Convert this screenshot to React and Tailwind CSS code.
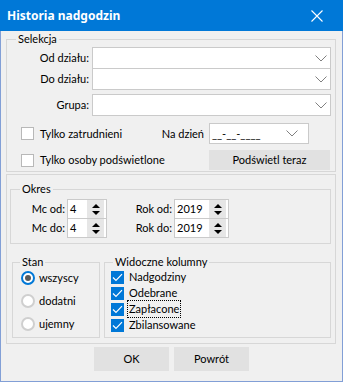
function Chevron() {
  return (
    <svg width="12" height="7" viewBox="0 0 12 7">
      <polyline points="0.5,0.5 6,6 11.5,0.5" fill="none" stroke="#808080" strokeWidth="1" />
    </svg>
  );
}

function Combo() {
  return (
    <div className="ml-[3px] w-[239px] h-[22px] flex items-center justify-end bg-white border border-[#cacaca] pr-[3px]">
      <Chevron />
    </div>
  );
}

function Spin({ value, width }) {
  return (
    <div className={`ml-[2px] h-[20px] flex items-stretch bg-white border border-[#cacaca] ${width}`}>
      <span className="flex-1 pl-[2px] leading-[18px]">{value}</span>
      <div className="w-[17px] mr-[2px] bg-[#e6e6e6] flex flex-col items-center justify-center gap-[3px]">
        <svg width="8" height="4" viewBox="0 0 8 4">
          <polygon points="4,0 8,4 0,4" fill="#000" />
        </svg>
        <svg width="8" height="4" viewBox="0 0 8 4">
          <polygon points="0,0 8,0 4,4" fill="#000" />
        </svg>
      </div>
    </div>
  );
}

function Box() {
  return <span className="block w-[13px] h-[13px] shrink-0 bg-white border border-[#b8b8b8]" />;
}

function Checked() {
  return (
    <span className="w-[13px] h-[13px] shrink-0 bg-[#0078d7] flex items-center justify-center">
      <svg width="11" height="9" viewBox="0 0 11 9">
        <polyline points="1,4.5 4,7.5 10,1.2" fill="none" stroke="#fff" strokeWidth="1.2" />
      </svg>
    </span>
  );
}

function Radio({ checked }) {
  if (checked) {
    return (
      <span className="w-[14px] h-[14px] shrink-0 rounded-full border-2 border-[#0078d7] bg-white flex items-center justify-center">
        <span className="w-[6px] h-[6px] rounded-full bg-[#5a5a5a]" />
      </span>
    );
  }
  return <span className="block w-[14px] h-[14px] shrink-0 rounded-full border-2 border-[#cfcfcf] bg-white" />;
}

export default function App() {
  const stan = [
    { label: "wszyscy", checked: true },
    { label: "dodatni", checked: false },
    { label: "ujemny", checked: false },
  ];

  return (
    <div className="w-[343px] h-[382px] flex flex-col bg-[#829fd6] font-['Lato',sans-serif] text-[11px] leading-[16px] text-black">
      <div className="h-[31px] shrink-0 flex items-center justify-between pl-[7px] pr-[20px] bg-[#0078d7] text-white text-[12px] font-bold font-['Noto_Sans',sans-serif]">
        <span>Historia nadgodzin</span>
        <svg width="12" height="12" viewBox="0 0 12 12">
          <path d="M0.5 0.5 L11.5 11.5 M11.5 0.5 L0.5 11.5" stroke="#fff" strokeWidth="1.1" />
        </svg>
      </div>

      <div className="flex-1 mx-[1px] mb-[1px] bg-[#f0f0f0] flex flex-col pt-[1px]">
        {/* Selekcja */}
        <fieldset className="ml-[5px] w-[330px] h-[140px] border border-[#d7d7d7] min-w-0">
          <legend className="ml-[9px] px-[2px] leading-[14px]">Selekcja</legend>
          <div className="flex flex-col mt-[1px]">
            <div className="flex items-center h-[22px]">
              <span className="w-[82px] text-right">Od działu:</span>
              <Combo />
            </div>
            <div className="flex items-center h-[22px] -mt-px">
              <span className="w-[82px] text-right">Do działu:</span>
              <Combo />
            </div>
            <div className="flex items-center h-[22px] mt-[4px]">
              <span className="w-[82px] text-right">Grupa:</span>
              <Combo />
            </div>

            <div className="flex items-center h-[21px] mt-[7px]">
              <span className="ml-[14px]"><Box /></span>
              <span className="ml-[6px] flex-1">Tylko zatrudnieni</span>
              <span>Na dzień</span>
              <div className="ml-[5px] mr-[26px] w-[100px] h-[21px] flex items-center bg-white border border-[#cacaca]">
                <span className="pl-[2px]">__-__-____</span>
                <span className="ml-auto mr-[10px] flex"><Chevron /></span>
              </div>
            </div>
            <div className="flex items-center h-[20px] mt-[6px]">
              <span className="ml-[14px]"><Box /></span>
              <span className="ml-[6px] flex-1">Tylko osoby podświetlone</span>
              <button className="mr-[5px] w-[121px] h-[20px] bg-[#e1e1e1]">Podświetl teraz</button>
            </div>
          </div>
        </fieldset>

        {/* Okres / Stan / Widoczne */}
        <div className="ml-[5px] mt-[2px] w-[330px] h-[170px] border border-[#d7d7d7] flex flex-col">
          <fieldset className="ml-[3px] mt-[7px] w-[321px] h-[62px] border border-[#d7d7d7] min-w-0">
            <legend className="ml-[9px] px-[2px] leading-[14px]">Okres</legend>
            <div className="flex flex-col mt-[3px]">
              <div className="flex items-center h-[20px]">
                <span className="w-[54px] text-right">Mc od:</span>
                <Spin value="4" width="w-[40px]" />
                <span className="w-[65px] text-right">Rok od:</span>
                <Spin value="2019" width="w-[55px]" />
              </div>
              <div className="flex items-center h-[20px] -mt-px">
                <span className="w-[54px] text-right">Mc do:</span>
                <Spin value="4" width="w-[40px]" />
                <span className="w-[65px] text-right">Rok do:</span>
                <Spin value="2019" width="w-[55px]" />
              </div>
            </div>
          </fieldset>

          <div className="flex ml-[5px] mt-[11px] gap-[4px]">
            <fieldset className="w-[88px] h-[83px] border border-[#d7d7d7] min-w-0">
              <legend className="ml-[7px] px-[2px] leading-[14px]">Stan</legend>
              <div className="flex flex-col gap-[7px] mt-[1px]">
                {stan.map((s) => (
                  <div key={s.label} className="flex items-center h-[16px]">
                    <span className="ml-[8px] flex"><Radio checked={s.checked} /></span>
                    <span className="ml-[4px]">{s.label}</span>
                  </div>
                ))}
              </div>
            </fieldset>

            <fieldset className="w-[227px] h-[83px] border border-[#d7d7d7] min-w-0">
              <legend className="ml-[8px] px-[2px] leading-[14px]">Widoczne kolumny</legend>
              <div className="flex flex-col">
                <div className="flex items-center h-[16px]">
                  <span className="ml-[6px] flex"><Checked /></span>
                  <span className="ml-[5px]">Nadgodziny</span>
                </div>
                <div className="flex items-center h-[16px]">
                  <span className="ml-[6px] flex"><Checked /></span>
                  <span className="ml-[5px]">Odebrane</span>
                </div>
                <div className="flex items-center h-[16px]">
                  <span className="ml-[6px] flex"><Checked /></span>
                  <span className="ml-[3px] px-[1px] leading-[16px] border border-dotted border-black">Zapłacone</span>
                </div>
                <div className="flex items-center h-[16px]">
                  <span className="ml-[6px] flex"><Checked /></span>
                  <span className="ml-[5px]">Zbilansowane</span>
                </div>
              </div>
            </fieldset>
          </div>
        </div>

        <div className="flex justify-center gap-[5px] mt-[3px]">
          <button className="w-[75px] h-[24px] bg-[#e1e1e1]">OK</button>
          <button className="w-[75px] h-[24px] bg-[#e1e1e1]">Powrót</button>
        </div>
      </div>
    </div>
  );
}
